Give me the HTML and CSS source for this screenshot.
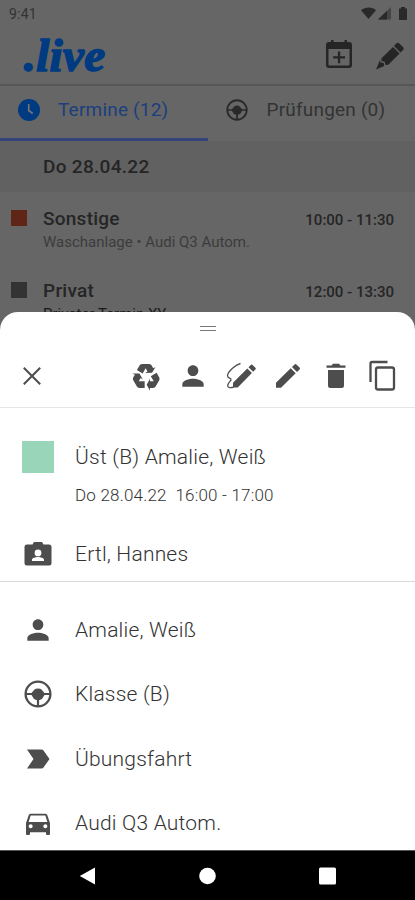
FILE: index.html
```html
<!DOCTYPE html>
<html lang="de">
<head>
<meta charset="utf-8">
<title>.live</title>
<link rel="stylesheet" href="styles.css">
</head>
<body>
<svg class="defs" width="0" height="0" aria-hidden="true">
  <symbol id="person" viewBox="0 0 24 24"><path d="M12 12c2.21 0 4-1.79 4-4s-1.79-4-4-4-4 1.79-4 4 1.79 4 4 4zm0 2c-2.67 0-8 1.34-8 4v2h16v-2c0-2.66-5.33-4-8-4z"/></symbol>
  <symbol id="wheel" viewBox="0 0 28 28"><circle cx="14" cy="14" r="12.4" fill="none" stroke="currentColor" stroke-width="2.300"/><path d="M2 13h5.500l3-3.400q1-1.200 3.500-1.200t3.500 1.200l3 3.400H26v2h-5.500l-2.500 4-2.900 1.200V26h-2.200v-5.800L10 19l-2.500-4H2z"/></symbol>
</svg>
<div class="phone">
  <div class="screen">
    <div class="status">
      <span class="clock">9:41</span>
      <svg class="signals" viewBox="0 0 48 16"><path d="M1 4.2C5.5.6 12.500.6 16 4.200L8.500 13z"/><path d="M18 13.500L31 1v12.500z" opacity=".55"/><path d="M18 13.500L27 5v8.500z"/><path d="M39 2.500h2V1h4v1.500h2v11.500h-8z"/></svg>
    </div>
    <header class="header">
      <div class="logo">.live</div>
      <svg class="add" viewBox="0 0 26 30"><path fill-rule="evenodd" d="M3 3h2V1h2.500v2h11V1H21v2h2q3 0 3 3v20q0 3-3 3H3q-3 0-3-3V6q0-3 3-3zM2.500 10v15.500q0 1 1 1h19q1 0 1-1V10z"/><path d="M11.900 12.500h2.300v4.700H19v2.300h-4.800v4.700h-2.300v-4.700H7.200v-2.300h4.700z"/></svg>
      <svg class="write" viewBox="0 0 28 28"><path d="M20.500 1.300q1.300-1.200 2.600 0l4 4q1.200 1.300 0 2.600L24.500 10.500 18 3.900zM17 5l6.600 6.600L12.300 22.800l-2.900.2-.7-3.300-3.200-.6-.2-2.700zM4 18l.5 2.400 3.200.5.5 3.100L0 27.500z"/></svg>
    </header>
    <nav class="tabs">
      <div class="tab active"><svg class="tab-icon" viewBox="0 0 22 22"><circle cx="11" cy="11" r="11"/><path class="hand" d="M10.700 5v6.500l4 3"/></svg><span>Termine (12)</span></div>
      <div class="tab exams"><svg class="tab-icon"><use href="#wheel"/></svg><span>Prüfungen (0)</span></div>
    </nav>
    <div class="date">Do 28.04.22</div>
    <div class="event">
      <i class="swatch red"></i>
      <div class="info"><div class="name">Sonstige</div><div class="desc">Waschanlage • Audi Q3 Autom.</div></div>
      <div class="time">10:00 - 11:30</div>
    </div>
    <div class="event">
      <i class="swatch gray"></i>
      <div class="info"><div class="name">Privat</div><div class="desc dark">Privater Termin XY</div></div>
      <div class="time">12:00 - 13:30</div>
    </div>
  </div>
  <section class="sheet">
    <div class="handle"></div>
    <div class="tools">
      <svg class="close" viewBox="0 0 18 18"><path d="M.8.8l16.400 16.400M17.200.8L.8 17.200"/></svg>
      <div class="actions">
        <svg viewBox="0 0 24 24"><path d="M21.820 15.420L19.320 19.750C18.830 20.610 17.920 21.060 17 21H15V23L12.500 18.500L15 14V16H17.820L15.600 12.150L19.930 9.650L21.730 12.770C22.250 13.540 22.320 14.570 21.820 15.420M9.210 3.060H14.210C15.190 3.060 16.040 3.630 16.450 4.450L17.450 6.190L19.180 5.190L16.540 9.600L11.390 9.690L13.120 8.690L11.710 6.240L9.500 10.090L5.160 7.590L6.960 4.470C7.370 3.640 8.220 3.060 9.210 3.060M5.050 19.760L2.550 15.430C2.060 14.580 2.130 13.560 2.640 12.790L3.640 11.060L1.910 10.060L7.050 10.140L9.700 14.560L7.970 13.560L6.560 16H11V21H7.400C6.470 21.070 5.550 20.610 5.050 19.760Z"/></svg>
        <svg><use href="#person"/></svg>
        <svg viewBox="0 0 32 32"><path d="M8 27.500v-4.800L22.300 8.400l4.600 4.600L12.700 27.500zM23.500 7.200l2.300-2.300q.9-.9 1.800 0l2.800 2.800q.9.900 0 1.800l-2.300 2.300z"/><path class="line" d="M15.500 3.500C11 4.500 3 11 2.500 15.500c0 3.500 4 2 3.500 4.500-.5 1.500-3.500 3-3.300 6 .3 2 3.300 2 6 1.200"/></svg>
        <svg viewBox="0 0 32 32"><path d="M4 27.800v-5L18.700 8.200l5 5L9 27.800zM20 6.900l2.600-2.500q.9-.9 1.800 0l3.200 3.200q.9.900 0 1.800L25 11.900z"/></svg>
        <svg viewBox="0 0 32 32"><path d="M8 10h16v15.500q0 2.500-2.500 2.500h-11Q8 28 8 25.500zM6.500 5.500h5L13 3.800h6l1.500 1.700h5v2.300h-19z"/></svg>
        <svg viewBox="0 0 32 32"><path class="outline" d="M3.500 22V3.500q0-1.500 1.500-1.500h15.500"/><rect class="outline" x="9" y="7.500" width="18" height="22" rx="2"/></svg>
      </div>
    </div>
    <div class="summary">
      <div class="lesson">
        <i class="type"></i>
        <div><div class="title">Üst (B) Amalie, Weiß</div><div class="when">Do 28.04.22&nbsp; 16:00 - 17:00</div></div>
      </div>
      <div class="row"><svg viewBox="0 0 32 32"><path fill-rule="evenodd" d="M10.500 6.500L12 4h8l1.500 2.500H27q2.500 0 2.500 2.500v16q0 2.500-2.500 2.500H5q-2.500 0-2.500-2.500V9q0-2.500 2.500-2.500zM16 11.500a3.400 3.400 0 1 0 0 6.800 3.400 3.400 0 0 0 0-6.800zM10 23h12v-1.200c0-2-3.500-2.900-6-2.900s-6 .9-6 2.900z"/></svg><span>Ertl, Hannes</span></div>
    </div>
    <div class="details">
      <div class="row"><svg><use href="#person"/></svg><span>Amalie, Weiß</span></div>
      <div class="row"><svg class="wheel"><use href="#wheel"/></svg><span>Klasse (B)</span></div>
      <div class="row"><svg viewBox="0 0 32 32"><path d="M5 6.500h14.500q1.300 0 2 1L27.500 16l-6 8.500q-.7 1-2 1H5L11.500 16z"/></svg><span>Übungsfahrt</span></div>
      <div class="row"><svg viewBox="0 0 24 24"><path fill-rule="evenodd" d="M18.920 6.010C18.720 5.420 18.160 5 17.500 5h-11c-.66 0-1.210.42-1.420 1.010L3 12v8c0 .55.45 1 1 1h1c.55 0 1-.45 1-1v-1h12v1c0 .55.45 1 1 1h1c.55 0 1-.45 1-1v-8l-2.080-5.990zM6.500 16c-.83 0-1.500-.67-1.500-1.500S5.670 13 6.500 13s1.500.67 1.500 1.500S7.330 16 6.500 16zm11 0c-.83 0-1.500-.67-1.500-1.500s.67-1.500 1.500-1.500 1.500.67 1.500 1.500-.67 1.500-1.500 1.500zM5 11.300l1.500-5h11l1.500 5H5z"/></svg><span>Audi Q3 Autom.</span></div>
    </div>
  </section>
  <footer class="navbar">
    <svg viewBox="0 0 16 18"><path d="M15.500.5v17L.3 9z"/></svg>
    <svg viewBox="0 0 17 17"><circle cx="8.500" cy="8.500" r="8.300"/></svg>
    <svg viewBox="0 0 17 17"><rect width="17" height="17" rx="1.500"/></svg>
  </footer>
</div>
</body>
</html>
```
FILE: styles.css
```css
* { box-sizing: border-box; }
body { margin: 0; font-family: Roboto, "Liberation Sans", sans-serif; }
svg { display: block; flex: none; fill: currentColor; }
.defs { position: absolute; }
.phone { width: 415px; height: 900px; background: #666; overflow: hidden; }
.screen { height: 312px; overflow: hidden; color: #252525; }

.status { height: 27px; display: flex; align-items: center; justify-content: space-between; padding: 0 7px 0 9px; color: #333; }
.clock { font-size: 14px; letter-spacing: .2px; }
.signals { width: 48px; height: 16px; color: #292929; }
.header { height: 59px; display: flex; align-items: center; border-bottom: 2px solid #575757; padding: 0 11px 0 24px; }
.logo { flex: 1; font: italic 700 47px/47px "Liberation Serif", serif; letter-spacing: .4px; color: #003a80; -webkit-text-stroke: 1.6px #003a80; }
.add { width: 26px; height: 30px; margin-right: 24px; margin-top: -4px; }
.write { width: 28px; height: 28px; }

.tabs { display: flex; height: 55px; }
.tab { width: 208px; display: flex; align-items: center; gap: 18px; padding: 0 0 5px 18px; font-size: 19px; letter-spacing: .2px; color: #333; border-bottom: 3px solid transparent; }
.tab.exams { gap: 19px; }
.tab.active { color: #1c3f7d; border-color: #34437a; }
.tab.active .tab-icon { color: #003a80; }
.tab-icon { width: 22px; height: 22px; color: #292929; }
.hand { fill: none; stroke: #777; stroke-width: 1.6; }

.date { height: 51px; line-height: 52px; padding-left: 43px; background: #616161; font-size: 19px; font-weight: 500; letter-spacing: .3px; }
.event { height: 72px; display: flex; padding: 16px 21px 0 11px; }
.swatch { width: 16px; height: 16px; margin: 2px 16px 0 0; }
.red { background: #5f2516; }
.gray { background: #333; }
.info { flex: 1; }
.name { font-size: 19px; line-height: 22px; font-weight: 500; letter-spacing: .25px; }
.desc { font-size: 15px; line-height: 16px; margin-top: 4px; color: #3c3c3c; white-space: nowrap; }
.desc.dark { color: #1a1a1a; }
.time { font-size: 15px; line-height: 25px; font-weight: 500; }

.sheet { height: 538px; background: #fff; border-radius: 18px 18px 0 0; color: #4d4d4d; }
.handle { width: 16px; height: 19px; margin: 0 auto; border-bottom: 1px solid #777; background: linear-gradient(#777, #777) 0 14px / 16px 1px no-repeat; }
.tools { height: 77px; display: flex; align-items: center; justify-content: space-between; padding: 13px 16px 0 23px; border-bottom: 1px solid #e5e5e5; }
.close { width: 18px; height: 18px; stroke: currentColor; stroke-width: 2; }
.actions { display: flex; gap: 15.5px; }
.actions svg, .row svg { width: 32px; height: 32px; }
.line { fill: none; stroke: currentColor; stroke-width: 1.3; }
.outline { fill: none; stroke: currentColor; stroke-width: 2.3; }

.summary { height: 174px; border-bottom: 1px solid #d8d8d8; }
.lesson { display: flex; height: 114px; padding: 33px 0 0 22px; gap: 21px; }
.type { width: 32px; height: 32px; background: #99d5b9; }
.title { font-size: 21px; line-height: 32px; font-weight: 300; letter-spacing: .22px; color: #333; }
.when { font-size: 17px; line-height: 20px; margin-top: 12px; font-weight: 300; letter-spacing: .2px; color: #333; }
.row { display: flex; align-items: center; height: 64.3px; padding-left: 22px; gap: 21px; font-size: 21px; font-weight: 300; letter-spacing: .2px; }
.row span { color: #333; }
.row svg.wheel { width: 28px; height: 28px; margin: 0 2px; }
.details { padding-top: 16px; }

.navbar { height: 50px; background: #000; color: #fff; display: flex; align-items: center; justify-content: space-between; padding: 0 79px; border-top: 1px solid #555; }
.navbar svg { width: 17px; height: 18px; }
```
